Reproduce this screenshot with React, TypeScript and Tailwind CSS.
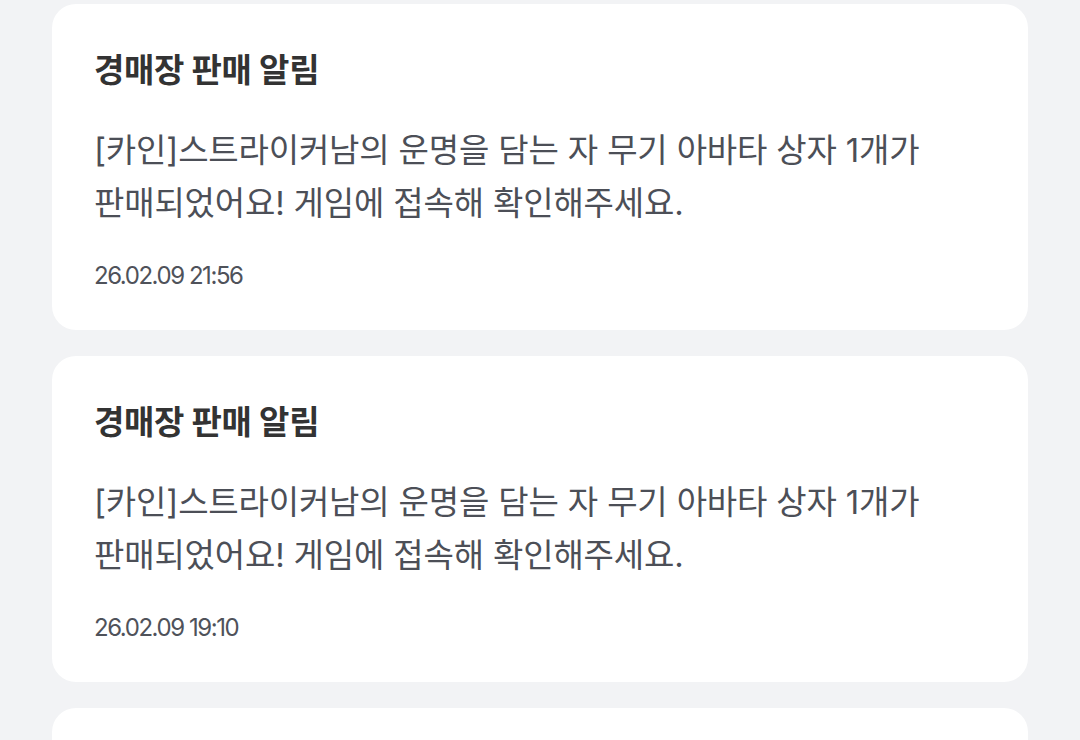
const notices = [
  {
    title: "경매장 판매 알림",
    body: "[카인]스트라이커남의 운명을 담는 자 무기 아바타 상자 1개가 판매되었어요! 게임에 접속해 확인해주세요.",
    date: "26.02.09 21:56",
  },
  {
    title: "경매장 판매 알림",
    body: "[카인]스트라이커남의 운명을 담는 자 무기 아바타 상자 1개가 판매되었어요! 게임에 접속해 확인해주세요.",
    date: "26.02.09 19:10",
  },
  {
    title: "경매장 판매 알림",
    body: "[카인]스트라이커남의 운명을 담는 자 무기 아바타 상자 1개가 판매되었어요! 게임에 접속해 확인해주세요.",
    date: "26.02.09 18:42",
  },
];

const App = () => {
  return (
    <div
      className="h-[740px] overflow-hidden bg-[#f2f3f5] px-[52px] pt-[4px]"
      style={{ fontFamily: '"Inter", "Noto Sans CJK KR", sans-serif' }}
    >
      <div className="flex flex-col gap-[26px]">
        {notices.map((n, idx) => (
          <div
            key={idx}
            className="rounded-[24px] bg-white pl-[42px] pr-[40px] pt-[46px] pb-[38px]"
          >
            <p className="text-[33px] font-bold leading-[40px] tracking-[-0.01em] text-[#333333]">
              {n.title}
            </p>
            <p className="mt-[34px] break-keep text-[33px] leading-[53px] tracking-[-0.005em] text-[#4c4f57]">
              {n.body}
            </p>
            <p className="mt-[30px] text-[24px] leading-[32px] tracking-[-0.06em] text-[#4f525a]">
              {n.date}
            </p>
          </div>
        ))}
      </div>
    </div>
  );
};

export default App;
